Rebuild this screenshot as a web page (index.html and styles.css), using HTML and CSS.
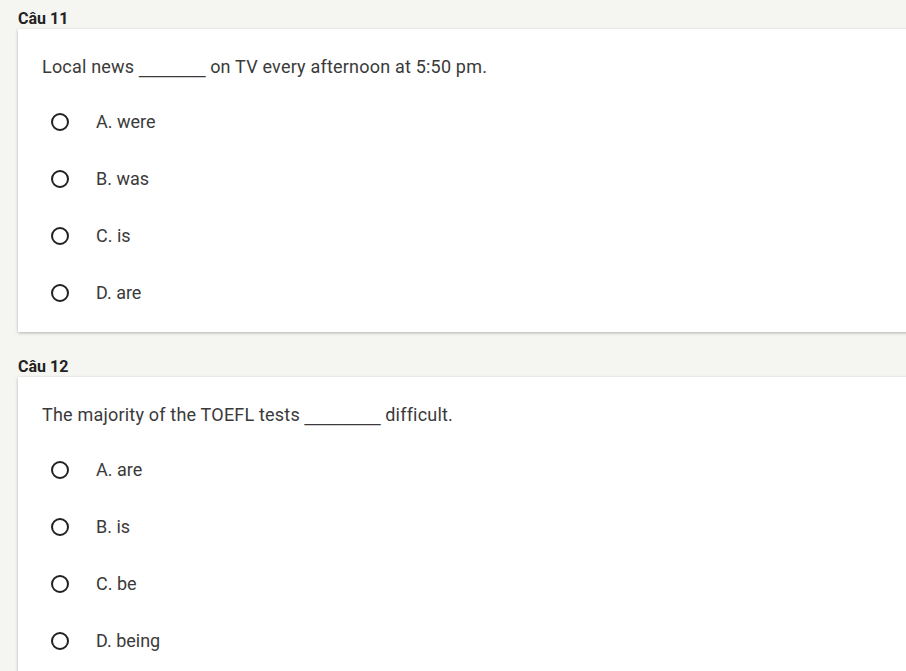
FILE: index.html
```html
<!DOCTYPE html>
<html lang="vi">
<head>
<meta charset="utf-8">
<title>Quiz</title>
<link rel="stylesheet" href="styles.css">
</head>
<body>
<main class="quiz">
  <section class="question">
    <h2 class="question-title">Câu 11</h2>
    <div class="card">
      <p class="prompt">Local news <span class="blank">_______</span> on TV every afternoon at 5:50 pm.</p>
      <ul class="options">
        <li class="option"><span class="radio"></span><span class="label">A. were</span></li>
        <li class="option"><span class="radio"></span><span class="label">B. was</span></li>
        <li class="option"><span class="radio"></span><span class="label">C. is</span></li>
        <li class="option"><span class="radio"></span><span class="label">D. are</span></li>
      </ul>
    </div>
  </section>
  <section class="question">
    <h2 class="question-title">Câu 12</h2>
    <div class="card">
      <p class="prompt">The majority of the TOEFL tests <span class="blank">________</span> difficult.</p>
      <ul class="options">
        <li class="option"><span class="radio"></span><span class="label">A. are</span></li>
        <li class="option"><span class="radio"></span><span class="label">B. is</span></li>
        <li class="option"><span class="radio"></span><span class="label">C. be</span></li>
        <li class="option"><span class="radio"></span><span class="label">D. being</span></li>
      </ul>
    </div>
  </section>
</main>
</body>
</html>
```
FILE: styles.css
```css
html, body {
  margin: 0;
  padding: 0;
  background: #f5f5f1;
  overflow: hidden;
}
body {
  font-family: Roboto, "Liberation Sans", Arial, sans-serif;
  color: #3a3a3a;
}
.quiz {
  padding-left: 18px;
}
.question + .question {
  margin-top: 16px;
}
.question-title {
  margin: 0;
  padding-top: 9px;
  font-size: 16px;
  line-height: 20px;
  font-weight: 700;
  color: #222;
}
.card {
  background: #fff;
  width: 960px;
  box-shadow: 0 1px 3px rgba(0, 0, 0, 0.28);
  padding: 26px 0 11px 24px;
  box-sizing: border-box;
}
.prompt {
  margin: 0 0 14px;
  font-size: 18px;
  line-height: 24px;
  letter-spacing: 0.2px;
}
.blank {
  font-family: "DejaVu Sans", sans-serif;
  font-size: 19px;
  line-height: 1;
  letter-spacing: 0;
}
.options {
  list-style: none;
  margin: 0;
  padding: 0;
}
.option {
  display: flex;
  align-items: center;
  height: 57px;
  padding-left: 9px;
  font-size: 18px;
}
.radio {
  width: 18px;
  height: 18px;
  border: 2px solid #222;
  border-radius: 50%;
  box-sizing: border-box;
  flex: none;
}
.label {
  margin-left: 27px;
}
```
